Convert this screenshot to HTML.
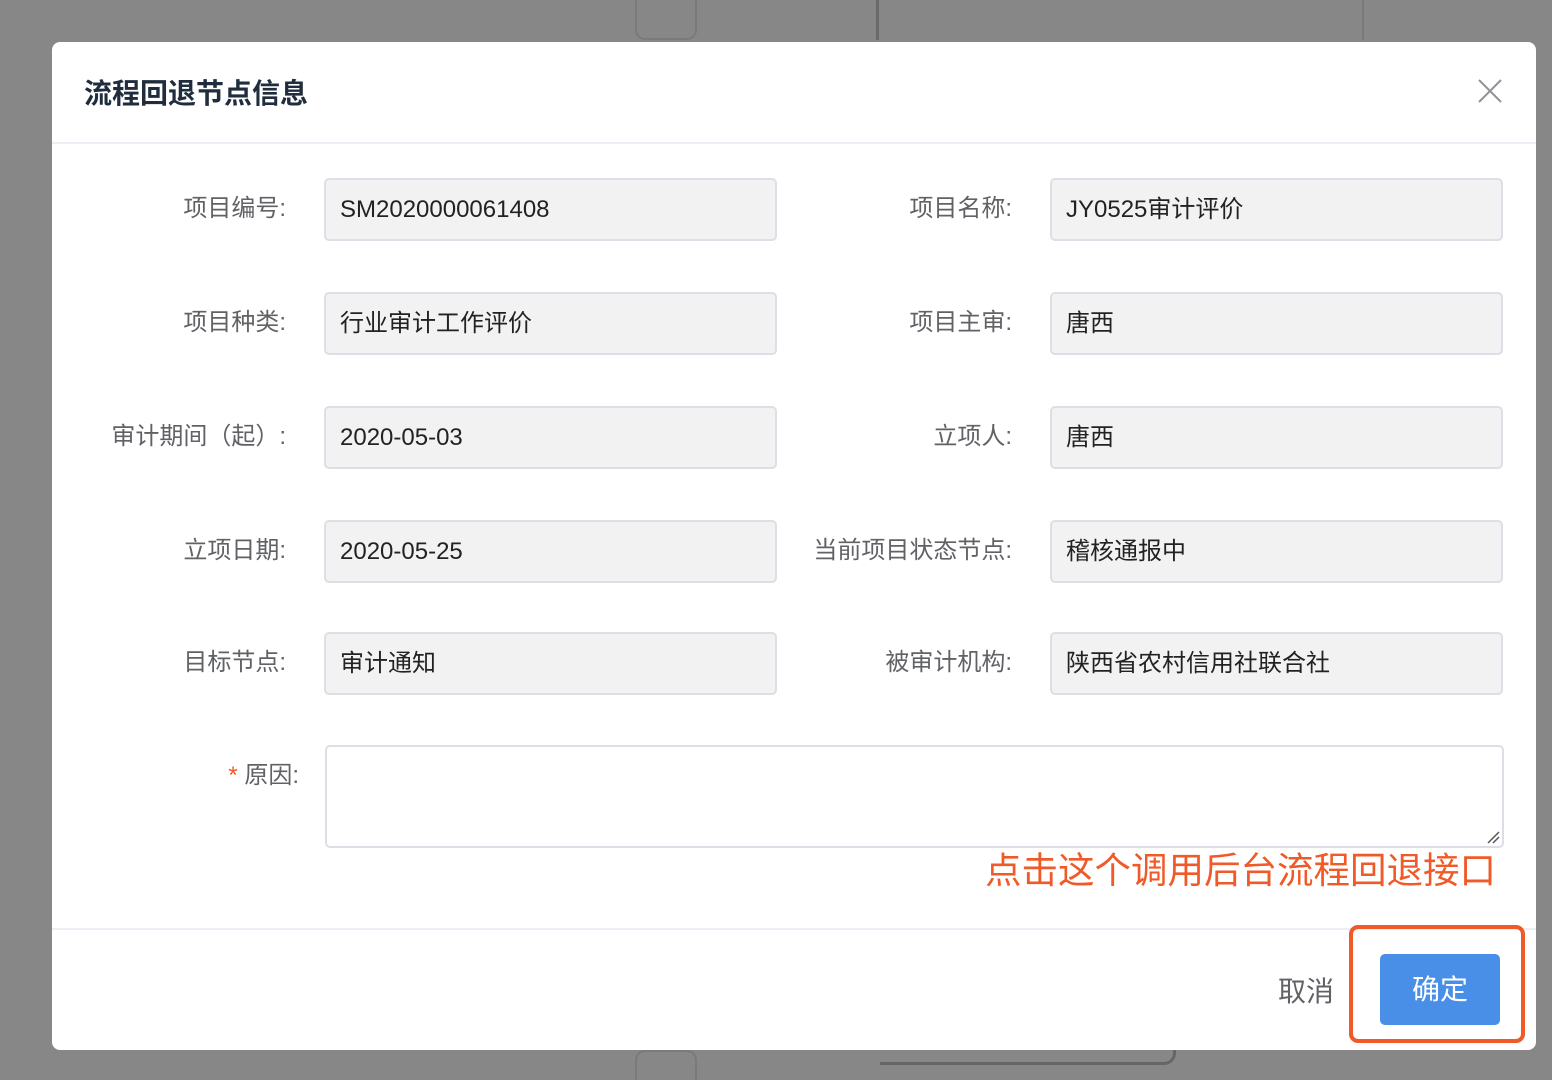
<!DOCTYPE html>
<html><head><meta charset="utf-8"><style>
*{box-sizing:border-box;margin:0;padding:0}
html,body{width:1552px;height:1080px;overflow:hidden}
body{background:#878787;position:relative;font-family:"Liberation Sans","Noto Sans CJK SC",sans-serif}
.bg{position:absolute;border:2px solid #7a7a7a}
.dlg{position:absolute;left:52px;top:42px;width:1484px;height:1008px;background:#fff;border-radius:8px}
.title{position:absolute;left:32px;top:30px;font-size:28px;font-weight:bold;color:#1f2d3d}
.hline{position:absolute;left:0;right:0;height:2px;background:#ebeef5}
.lab{position:absolute;font-size:24px;color:#606266;text-align:right;line-height:62px;height:62px;white-space:nowrap}
.inp{position:absolute;width:453px;height:63px;background:#f2f2f2;border:2px solid #dcdfe6;border-radius:5px;font-size:24px;color:#222;line-height:59px;padding-left:14px}
.ta{position:absolute;left:273px;top:703px;width:1179px;height:103px;border:2px solid #dcdfe6;border-radius:5px;background:#fff}
</style></head><body>
<div class="bg" style="left:635px;top:-20px;width:62px;height:60px;border-radius:0 0 10px 10px;border-top:none"></div>
<div class="bg" style="left:876px;top:-10px;width:0;height:50px;border-width:0 0 0 3px;border-color:#6a6a6a"></div>
<div class="bg" style="left:1362px;top:-10px;width:0;height:50px;border-width:0 0 0 2px"></div>
<div class="bg" style="left:880px;top:1035px;width:296px;height:30px;border-width:0 3px 3px 0;border-color:#666;border-radius:0 0 12px 0"></div>
<div class="bg" style="left:635px;top:1050px;width:62px;height:40px;border-bottom:none;border-radius:10px 10px 0 0"></div>
<div class="dlg">
<div class="title">流程回退节点信息</div>
<svg style="position:absolute;left:1426px;top:37px" width="24" height="24"><path d="M1 1L23 23M23 1L1 23" stroke="#909399" stroke-width="2"/></svg>
<div class="hline" style="top:100px"></div>
<div class="lab" style="left:0;width:234px;top:136px">项目编号:</div><div class="inp" style="left:272px;top:136px">SM2020000061408</div>
<div class="lab" style="left:700px;width:260px;top:136px">项目名称:</div><div class="inp" style="left:998px;top:136px">JY0525审计评价</div>
<div class="lab" style="left:0;width:234px;top:250px">项目种类:</div><div class="inp" style="left:272px;top:250px">行业审计工作评价</div>
<div class="lab" style="left:700px;width:260px;top:250px">项目主审:</div><div class="inp" style="left:998px;top:250px">唐西</div>
<div class="lab" style="left:0;width:234px;top:364px">审计期间（起）:</div><div class="inp" style="left:272px;top:364px">2020-05-03</div>
<div class="lab" style="left:700px;width:260px;top:364px">立项人:</div><div class="inp" style="left:998px;top:364px">唐西</div>
<div class="lab" style="left:0;width:234px;top:478px">立项日期:</div><div class="inp" style="left:272px;top:478px">2020-05-25</div>
<div class="lab" style="left:700px;width:260px;top:478px">当前项目状态节点:</div><div class="inp" style="left:998px;top:478px">稽核通报中</div>
<div class="lab" style="left:0;width:234px;top:590px">目标节点:</div><div class="inp" style="left:272px;top:590px">审计通知</div>
<div class="lab" style="left:700px;width:260px;top:590px">被审计机构:</div><div class="inp" style="left:998px;top:590px">陕西省农村信用社联合社</div>
<div class="lab" style="left:0;width:247px;top:703px"><span style="color:#f05a28">*</span> 原因:</div>
<div class="ta"><svg style="position:absolute;right:2px;bottom:2px" width="14" height="14"><path d="M2 13L13 2M7 13L13 7" stroke="#555" stroke-width="1.5"/></svg></div>
<div style="position:absolute;left:933px;top:799px;font-size:36.5px;color:#f05a28;white-space:nowrap">点击这个调用后台流程回退接口</div>
<div class="hline" style="top:886px"></div>
<div style="position:absolute;left:1226px;top:928px;font-size:28px;color:#606266">取消</div>
<div style="position:absolute;left:1328px;top:912px;width:120px;height:71px;background:#4a8fe7;border-radius:5px;color:#fff;font-size:28px;text-align:center;line-height:71px">确定</div>
</div>
<div style="position:absolute;left:1349px;top:925px;width:176px;height:118px;border:4px solid #f05a28;border-radius:9px"></div>
</body></html>
